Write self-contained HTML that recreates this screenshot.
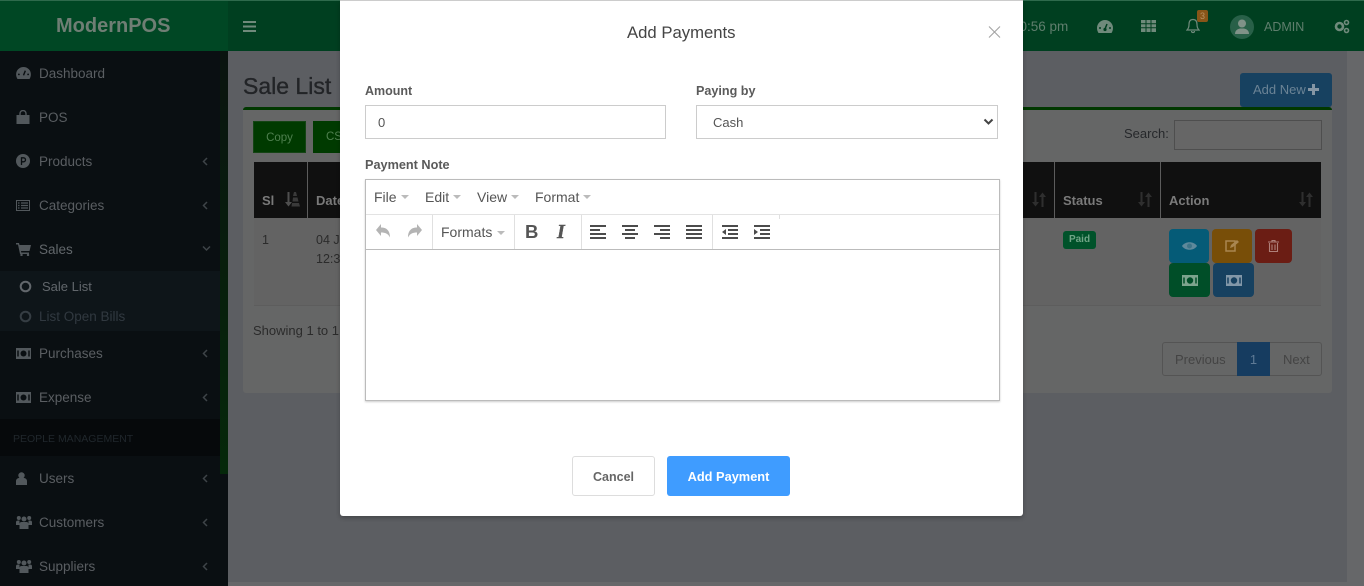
<!DOCTYPE html>
<html><head><meta charset="utf-8"><title>Add Payments</title>
<style>
html,body{margin:0;padding:0;width:1364px;height:586px;overflow:hidden;background:#5c5e62;font-family:"Liberation Sans",sans-serif}
div,span,svg{position:absolute;box-sizing:border-box}
.t{white-space:nowrap;line-height:20px}
.s{color:#5a5e62;font-size:13.5px}
.h{font-weight:bold;color:#7a7a7a;font-size:13px}
.bar{fill:#4c4c4c}
</style></head><body>
<!-- header -->
<div style="left:0;top:0;width:1364px;height:51px;background:#003f20;border-top:1px solid #2e6a4c"></div>
<div style="left:0;top:1px;width:228px;height:50px;background:#004724"></div>
<div class="t" style="left:56px;top:16px;font-size:20px;font-weight:bold;color:#6f7e74;">ModernPOS</div>
<svg style="left:243px;top:21px" width="13" height="11"><rect y="0" width="13" height="2" fill="#6f8a7b"/><rect y="4.5" width="13" height="2" fill="#6f8a7b"/><rect y="9" width="13" height="2" fill="#6f8a7b"/></svg>
<div class="t" style="left:1012px;top:17px;font-size:13.500px;color:#5f7e6d">10:56 pm</div>
<svg style="left:1097px;top:20px" width="16" height="13" viewBox="0 0 16 13"><path d="M8 0a8 8 0 0 0-8 8c0 2 .6 3.600 1.500 5h13c.9-1.400 1.500-3 1.500-5a8 8 0 0 0-8-8z" fill="#6f8a7b"/><path d="M8 9L10 4" stroke="#003f20" stroke-width="1.500"/><circle cx="8" cy="9.500" r="1.600" fill="#003f20"/><circle cx="3" cy="8" r="1" fill="#003f20"/><circle cx="13" cy="8" r="1" fill="#003f20"/></svg>
<svg style="left:1141px;top:20px" width="15" height="12"><path d="M0 0h15v12H0z" fill="#6f8a7b"/><path d="M0 3.800h15M0 7.800h15M5 0v12M10 0v12" stroke="#003f20"/></svg>
<svg style="left:1186px;top:18px" width="14" height="16" viewBox="0 0 14 16"><path d="M7 1.500c-3 0-4 2-4 5 0 3-1 4.500-2 5.500h12c-1-1-2-2.500-2-5.500 0-3-1-5-4-5zM5.500 13c0 2 3 2 3 0" fill="none" stroke="#6f8a7b" stroke-width="1.200"/></svg>
<div class="t" style="left:1197px;top:10px;width:11px;height:12px;background:#885518;border-radius:2px;color:#b59060;font-size:9px;line-height:12px;text-align:center">3</div>
<div style="left:1230px;top:15px;width:24px;height:24px;border-radius:12px;background:#286048"></div>
<svg style="left:1234px;top:18px" width="16" height="18" viewBox="0 0 16 18"><circle cx="8" cy="5.500" r="4" fill="#809288"/><path d="M1 16c0-4 3-5 5-5.500h4c2 .5 5 1.500 5 5.500z" fill="#809288"/></svg>
<div class="t" style="left:1264px;top:17px;font-size:12.500px;color:#5f7e6d">ADMIN</div>
<svg style="left:1334px;top:19px" width="16" height="15" viewBox="0 0 16 15"><circle cx="5.500" cy="7.500" r="3.500" fill="none" stroke="#6f8a7b" stroke-width="2.600"/><circle cx="12.500" cy="3.500" r="2" fill="none" stroke="#6f8a7b" stroke-width="1.600"/><circle cx="12.500" cy="11.500" r="2" fill="none" stroke="#6f8a7b" stroke-width="1.600"/></svg>

<!-- sidebar -->
<div style="left:0;top:51px;width:228px;height:535px;background:#0a0f12"></div>
<div style="left:220px;top:51px;width:8px;height:423px;background:linear-gradient(#0a140f,#05280a)"></div>
<div style="left:0;top:271px;width:220px;height:60px;background:#0e1519"></div>
<div style="left:0;top:419px;width:220px;height:37px;background:#06090b"></div>

<svg style="left:16px;top:67px" width="15" height="12" viewBox="0 0 16 13"><path d="M8 0a8 8 0 0 0-8 8c0 2 .6 3.600 1.500 5h13c.9-1.400 1.500-3 1.500-5a8 8 0 0 0-8-8z" fill="#52585c"/><path d="M8 9L10 4" stroke="#0a0f12" stroke-width="1.500"/><circle cx="3" cy="8" r="1" fill="#0a0f12"/><circle cx="13" cy="8" r="1" fill="#0a0f12"/></svg>
<div class="t s" style="left:39px;top:64px">Dashboard</div>
<svg style="left:16px;top:110px" width="14" height="14"><path d="M4 5V3.500a3 3 0 0 1 6 0V5" fill="none" stroke="#52585c" stroke-width="1.400"/><path d="M.5 5h13v9H.5z" fill="#52585c"/></svg>
<div class="t s" style="left:39px;top:108px">POS</div>
<svg style="left:16px;top:154px" width="14" height="14"><circle cx="7" cy="7" r="7" fill="#52585c"/><path d="M5.500 11V3.800h2a1.900 1.900 0 0 1 0 4h-2" fill="none" stroke="#0a0f12" stroke-width="1.300"/></svg>
<div class="t s" style="left:39px;top:152px">Products</div>
<svg style="left:16px;top:200px" width="14" height="11"><path d="M.5.500h13v10H.500z" fill="none" stroke="#52585c"/><path d="M2 3h1.500M5 3h7M2 5.500h1.500M5 5.500h7M2 8h1.500M5 8h7" stroke="#52585c" stroke-width="1.200"/></svg>
<div class="t s" style="left:39px;top:196px">Categories</div>
<svg style="left:16px;top:243px" width="15" height="13"><path d="M0 0h3l.5 2H15l-1.500 6H5l.3 1.500H13V11H4L2 1.500H0z" fill="#52585c"/><circle cx="5.500" cy="12" r="1.200" fill="#52585c"/><circle cx="12" cy="12" r="1.200" fill="#52585c"/></svg>
<div class="t s" style="left:39px;top:240px;color:#62676b">Sales</div>
<svg style="left:19px;top:280px" width="13" height="13"><circle cx="6.500" cy="6.500" r="4.800" fill="none" stroke="#62676c" stroke-width="2"/></svg>
<div class="t s" style="left:42px;top:277px;color:#62676c;font-size:13px">Sale List</div>
<svg style="left:19px;top:310px" width="13" height="13"><circle cx="6.500" cy="6.500" r="4.800" fill="none" stroke="#353d43" stroke-width="2"/></svg>
<div class="t s" style="left:39px;top:307px;color:#313940;font-size:13.500px">List Open Bills</div>
<svg style="left:16px;top:348px" width="15" height="11"><path d="M0 0h15v11H0z" fill="#52585c"/><circle cx="7.500" cy="5.500" r="3" fill="#0a0f12"/><path d="M2 2.500v6M13 2.500v6" stroke="#0a0f12" stroke-width="1.500"/></svg>
<div class="t s" style="left:39px;top:344px">Purchases</div>
<svg style="left:16px;top:392px" width="15" height="11"><path d="M0 0h15v11H0z" fill="#52585c"/><circle cx="7.500" cy="5.500" r="3" fill="#0a0f12"/><path d="M2 2.500v6M13 2.500v6" stroke="#0a0f12" stroke-width="1.500"/></svg>
<div class="t s" style="left:39px;top:388px">Expense</div>
<div class="t" style="left:13px;top:429px;font-size:10.500px;color:#20272c">PEOPLE MANAGEMENT</div>
<svg style="left:16px;top:472px" width="11" height="13"><circle cx="5.500" cy="3.500" r="3.200" fill="#52585c"/><path d="M0 13V9c0-2 2-3 3-3h5c1 0 3 1 3 3v4z" fill="#52585c"/></svg>
<div class="t s" style="left:39px;top:469px">Users</div>
<svg style="left:16px;top:515px" width="16" height="14"><circle cx="8" cy="4" r="2.500" fill="#52585c"/><circle cx="2.800" cy="3" r="2" fill="#52585c"/><circle cx="13.200" cy="3" r="2" fill="#52585c"/><path d="M3.500 14V9c0-1.500 1-2 2-2h5c1 0 2 .5 2 2v5zM0 10V7c0-1 1-1.500 2-1.500h1.500V10zM16 10V7c0-1-1-1.500-2-1.500h-1.500V10z" fill="#52585c"/></svg>
<div class="t s" style="left:39px;top:513px">Customers</div>
<svg style="left:16px;top:559px" width="16" height="14"><circle cx="8" cy="4" r="2.500" fill="#52585c"/><circle cx="2.800" cy="3" r="2" fill="#52585c"/><circle cx="13.200" cy="3" r="2" fill="#52585c"/><path d="M3.500 14V9c0-1.500 1-2 2-2h5c1 0 2 .5 2 2v5zM0 10V7c0-1 1-1.500 2-1.500h1.500V10zM16 10V7c0-1-1-1.500-2-1.500h-1.500V10z" fill="#52585c"/></svg>
<div class="t s" style="left:39px;top:557px">Suppliers</div>
<svg style="left:202px;top:157px" width="6" height="9"><path d="M5 1L1.500 4.500 5 8" fill="none" stroke="#3e4448" stroke-width="1.500"/></svg>
<svg style="left:202px;top:201px" width="6" height="9"><path d="M5 1L1.500 4.500 5 8" fill="none" stroke="#3e4448" stroke-width="1.500"/></svg>
<svg style="left:202px;top:245px" width="9" height="8"><path d="M1 1.500L4.500 5 8 1.500" fill="none" stroke="#3e4448" stroke-width="1.500"/></svg>
<svg style="left:202px;top:349px" width="6" height="9"><path d="M5 1L1.500 4.500 5 8" fill="none" stroke="#3e4448" stroke-width="1.500"/></svg>
<svg style="left:202px;top:393px" width="6" height="9"><path d="M5 1L1.500 4.500 5 8" fill="none" stroke="#3e4448" stroke-width="1.500"/></svg>
<svg style="left:202px;top:474px" width="6" height="9"><path d="M5 1L1.500 4.500 5 8" fill="none" stroke="#3e4448" stroke-width="1.500"/></svg>
<svg style="left:202px;top:518px" width="6" height="9"><path d="M5 1L1.500 4.500 5 8" fill="none" stroke="#3e4448" stroke-width="1.500"/></svg>
<svg style="left:202px;top:562px" width="6" height="9"><path d="M5 1L1.500 4.500 5 8" fill="none" stroke="#3e4448" stroke-width="1.500"/></svg>

<!-- content -->
<div style="left:1347px;top:51px;width:17px;height:535px;background:#666769"></div>
<div style="left:228px;top:582px;width:1136px;height:4px;background:#666769"></div>
<div class="t" style="left:243px;top:73px;font-size:23px;line-height:26px;color:#222427;-webkit-text-stroke:.35px #222427">Sale List</div>
<div style="left:243px;top:107px;width:1089px;height:286px;background:#656666;border-top:3px solid #003800;border-radius:3px"></div>
<div style="left:1240px;top:73px;width:92px;height:34px;background:#174160;border-radius:3px"></div>
<div class="t" style="left:1253px;top:80px;font-size:13px;color:#6b8395">Add New</div>
<svg style="left:1308px;top:84px" width="11" height="11"><path d="M4 0h3v4h4v3H7v4H4V7H0V4h4z" fill="#8596a4"/></svg>
<div class="t" style="left:253px;top:121px;width:53px;height:32px;line-height:33px;background:#003a00;border:1px solid #144414;text-align:center;font-size:11.500px;color:#4f804f">Copy</div>
<div class="t" style="left:313px;top:121px;width:27px;height:32px;line-height:33px;background:#003a00;padding-left:13px;font-size:11.500px;color:#4f804f;overflow:hidden">CSV</div>
<div class="t" style="left:1124px;top:124px;font-size:13px;color:#26282b">Search:</div>
<div style="left:1174px;top:120px;width:148px;height:30px;border:1px solid #4e4e4e;background:#666"></div>

<!-- table -->
<div style="left:254px;top:162px;width:1067px;height:56px;background:#101010"></div>
<div style="left:307px;top:162px;width:1px;height:56px;background:#5c5c5c"></div>
<div style="left:1054px;top:162px;width:1px;height:56px;background:#5c5c5c"></div>
<div style="left:1160px;top:162px;width:1px;height:56px;background:#5c5c5c"></div>
<div style="left:254px;top:218px;width:1067px;height:88px;background:#636363;border-bottom:1px solid #5d5d5d"></div>
<div class="t h" style="left:262px;top:191px">Sl</div>
<div class="t h" style="left:316px;top:191px;width:24px;overflow:hidden">Date</div>
<div class="t h" style="left:1063px;top:191px">Status</div>
<div class="t h" style="left:1169px;top:191px">Action</div>
<svg style="left:285px;top:192px" width="15" height="15"><path d="M2.500 0h2v10H7l-3.500 4.500L0 10h2.500z" fill="#4f4f4f"/><path d="M9 0h2l1 4H8zM8 5.500h4.500l1 4H7.500zM7 11h7l1 3.500H6.500z" fill="#3a3a3a"/></svg>
<svg style="left:1032px;top:192px" width="14" height="15"><path d="M2.500 0h2v10H7l-3.500 4.500L0 10h2.500zM9.500 15V5H7l3.500-4.500L14 5h-2.500v10z" fill="#2f2f2f"/></svg>
<svg style="left:1138px;top:192px" width="14" height="15"><path d="M2.500 0h2v10H7l-3.500 4.500L0 10h2.500zM9.500 15V5H7l3.500-4.500L14 5h-2.500v10z" fill="#2f2f2f"/></svg>
<svg style="left:1299px;top:192px" width="14" height="15"><path d="M2.500 0h2v10H7l-3.500 4.500L0 10h2.500zM9.500 15V5H7l3.500-4.500L14 5h-2.500v10z" fill="#2f2f2f"/></svg>
<div class="t" style="left:262px;top:230px;font-size:12.500px;color:#2b2b2b">1</div>
<div class="t" style="left:316px;top:230px;font-size:12.500px;color:#2b2b2b;width:24px;overflow:hidden">04 Jun</div>
<div class="t" style="left:316px;top:249px;font-size:12.500px;color:#2b2b2b;width:24px;overflow:hidden">12:30</div>
<div class="t" style="left:1063px;top:231px;width:33px;height:18px;line-height:17px;background:#00522a;border-radius:3px;text-align:center;font-size:10px;font-weight:bold;color:#6fa486">Paid</div>

<div style="left:1169px;top:229px;width:40px;height:34px;background:#055b77;border-radius:4px"></div>
<div style="left:1212px;top:229px;width:40px;height:34px;background:#784e08;border-radius:4px"></div>
<div style="left:1255px;top:229px;width:37px;height:34px;background:#6b1d14;border-radius:4px"></div>
<div style="left:1169px;top:263px;width:41px;height:34px;background:#004e28;border-radius:4px"></div>
<div style="left:1213px;top:263px;width:41px;height:34px;background:#174160;border-radius:4px"></div>
<svg style="left:1182px;top:241px" width="15" height="10"><path d="M0 5C3 0 12 0 15 5C12 10 3 10 0 5z" fill="#5f899b"/><circle cx="7.500" cy="5" r="2.500" fill="#3e7488"/></svg>
<svg style="left:1225px;top:240px" width="14" height="12"><path d="M1 1h9v10H1z" fill="none" stroke="#a98650" stroke-width="1.500"/><path d="M5 8l1-3 6-5 2 2-6 5z" fill="#a98650"/></svg>
<svg style="left:1268px;top:240px" width="11" height="12"><path d="M0 2h11M4 2V.5h3V2M1.500 3v8.500h8V3M4 4.500v5.500M7 4.500v5.500" fill="none" stroke="#af807a" stroke-width="1.100"/></svg>
<svg style="left:1182px;top:275px" width="16" height="11"><path d="M0 0h16v11H0z" fill="#7ca48d"/><circle cx="8" cy="5.500" r="3.200" fill="#004e28"/><path d="M2 2.500v6M14 2.500v6" stroke="#004e28" stroke-width="1.500"/></svg>
<svg style="left:1226px;top:275px" width="16" height="11"><path d="M0 0h16v11H0z" fill="#8297a8"/><circle cx="8" cy="5.500" r="3.200" fill="#174160"/><path d="M2 2.500v6M14 2.500v6" stroke="#174160" stroke-width="1.500"/></svg>

<div class="t" style="left:253px;top:321px;font-size:13px;color:#2b2b2b;width:87px;overflow:hidden">Showing 1 to 1 of 1</div>
<div style="left:1162px;top:342px;width:160px;height:34px;border:1px solid #545454;border-radius:3px"></div>
<div class="t" style="left:1175px;top:350px;font-size:13px;color:#444">Previous</div>
<div class="t" style="left:1237px;top:342px;width:33px;height:34px;line-height:35px;background:#163c60;text-align:center;font-size:13px;color:#5f7a95">1</div>
<div class="t" style="left:1283px;top:350px;font-size:13px;color:#444">Next</div>

<!-- modal -->
<div style="left:340px;top:0;width:683px;height:516px;background:#fff;border-top:1px solid #ccc;border-radius:0 0 3px 3px;box-shadow:0 2px 4px rgba(0,0,0,.25)"></div>
<div class="t" style="left:627px;top:23px;font-size:16.700px;color:#444;">Add Payments</div>
<svg style="left:988px;top:26px" width="13" height="12"><path d="M1 .5L12 11.500M12 .5L1 11.500" stroke="#a3a3a3" stroke-width="1.100"/></svg>
<div class="t" style="left:365px;top:81px;font-size:12.500px;font-weight:bold;color:#5a5a5a">Amount</div>
<div class="t" style="left:696px;top:81px;font-size:12.600px;font-weight:bold;color:#5a5a5a">Paying by</div>
<div class="t" style="left:365px;top:105px;width:301px;height:34px;line-height:34px;border:1px solid #ccc;padding-left:12px;font-size:13px;color:#555">0</div>
<div class="t" style="left:696px;top:105px;width:302px;height:34px;line-height:34px;border:1px solid #ccc;padding-left:16px;font-size:13px;color:#555">Cash</div>
<svg style="left:983px;top:118px" width="11" height="8"><path d="M1.500 1.500L5.500 5.500 9.500 1.500" fill="none" stroke="#444" stroke-width="2"/></svg>
<div class="t" style="left:365px;top:155px;font-size:12.700px;font-weight:bold;color:#5a5a5a">Payment Note</div>

<!-- editor -->
<div style="left:365px;top:179px;width:635px;height:222px;border:1px solid #bbb;box-shadow:0 1px 2px rgba(0,0,0,.2)"></div>
<div style="left:366px;top:214px;width:633px;height:1px;background:#e3e3e3"></div>
<div style="left:366px;top:249px;width:633px;height:1px;background:#bbb"></div>
<div class="t" style="left:374px;top:187px;font-size:14px;color:#555">File</div>
<div class="t" style="left:425px;top:187px;font-size:14px;color:#555">Edit</div>
<div class="t" style="left:477px;top:187px;font-size:14px;color:#555">View</div>
<div class="t" style="left:535px;top:187px;font-size:14px;color:#555">Format</div>
<svg style="left:401px;top:195px" width="8" height="4"><path d="M0 0h8L4 4z" fill="#bbb"/></svg>
<svg style="left:453px;top:195px" width="8" height="4"><path d="M0 0h8L4 4z" fill="#bbb"/></svg>
<svg style="left:511px;top:195px" width="8" height="4"><path d="M0 0h8L4 4z" fill="#bbb"/></svg>
<svg style="left:583px;top:195px" width="8" height="4"><path d="M0 0h8L4 4z" fill="#bbb"/></svg>
<svg style="left:376px;top:224px" width="14" height="14"><path d="M5 0v3.500c5 0 9 2.500 9 10C12 9.500 9 8.500 5 8.500V12L0 6z" fill="#b4b4b4"/></svg>
<svg style="left:408px;top:224px" width="14" height="14"><path d="M9 0v3.500c-5 0-9 2.500-9 10C2 9.500 5 8.500 9 8.500V12l5-6z" fill="#b4b4b4"/></svg>
<div style="left:432px;top:215px;width:1px;height:34px;background:#e0e0e0"></div>
<div class="t" style="left:441px;top:222px;font-size:14px;color:#555">Formats</div>
<svg style="left:497px;top:231px" width="8" height="4"><path d="M0 0h8L4 4z" fill="#bbb"/></svg>
<div style="left:514px;top:215px;width:1px;height:34px;background:#e0e0e0"></div>
<div class="t" style="left:525px;top:222px;font-size:18.500px;font-weight:bold;color:#555;">B</div>
<div class="t" style="left:557px;top:222px;font-size:20px;font-weight:bold;font-style:italic;font-family:'Liberation Serif',serif;color:#555;-webkit-text-stroke:.4px #555">I</div>
<div style="left:581px;top:215px;width:1px;height:34px;background:#e0e0e0"></div>
<svg style="left:590px;top:225px" width="16" height="14"><path d="M0 0h16v2H0zM0 4h10v2H0zM0 8h16v2H0zM0 12h16v2H0z" class="bar"/></svg>
<svg style="left:622px;top:225px" width="16" height="14"><path d="M0 0h16v2H0zM3 4h10v2H3zM0 8h16v2H0zM3 12h10v2H3z" class="bar"/></svg>
<svg style="left:654px;top:225px" width="16" height="14"><path d="M0 0h16v2H0zM6 4h10v2H6zM0 8h16v2H0zM6 12h10v2H6z" class="bar"/></svg>
<svg style="left:686px;top:225px" width="16" height="14"><path d="M0 0h16v2H0zM0 4h16v2H0zM0 8h16v2H0zM0 12h16v2H0z" class="bar"/></svg>
<div style="left:712px;top:215px;width:1px;height:34px;background:#e0e0e0"></div>
<svg style="left:722px;top:225px" width="16" height="14"><path d="M0 0h16v2H0zM6 4h10v2H6zM6 8h10v2H6zM0 12h16v2H0zM4 4v6L0 7z" class="bar"/></svg>
<svg style="left:754px;top:225px" width="16" height="14"><path d="M0 0h16v2H0zM6 4h10v2H6zM6 8h10v2H6zM0 12h16v2H0zM0 4v6l4-3z" class="bar"/></svg>
<div style="left:779px;top:215px;width:1px;height:4px;background:#e0e0e0"></div>

<!-- buttons -->
<div class="t" style="left:572px;top:456px;width:83px;height:40px;line-height:40px;border:1px solid #ddd;border-radius:3px;text-align:center;font-size:12.500px;font-weight:bold;color:#666">Cancel</div>
<div class="t" style="left:667px;top:456px;width:123px;height:40px;line-height:41px;background:#3f9cff;border-radius:3px;text-align:center;font-size:12.800px;font-weight:bold;color:#fff">Add Payment</div>
</body></html>
